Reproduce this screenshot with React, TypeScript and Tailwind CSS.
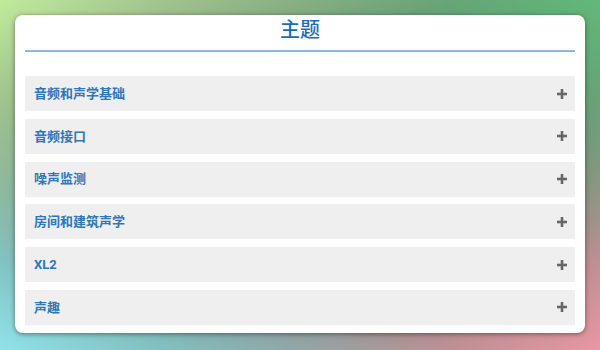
const topics = ['音频和声学基础', '音频接口', '噪声监测', '房间和建筑声学', 'XL2', '声趣']

function PlusIcon() {
  return (
    <svg width="10" height="10" viewBox="0 0 10 10" className="shrink-0">
      <rect x="0" y="3.7" width="10" height="2.6" fill="#666666" />
      <rect x="3.7" y="0" width="2.6" height="10" fill="#666666" />
    </svg>
  )
}

export default function App() {
  return (
    <div className="relative w-[600px] h-[350px] overflow-hidden bg-[#6c7f74] font-['Roboto','Noto_Sans_CJK_SC',sans-serif]">
      <div className="absolute inset-0 bg-[linear-gradient(to_bottom_right,#c0eb9c,rgba(192,235,156,0)_38%),linear-gradient(to_bottom_left,#62b878,rgba(98,184,120,0)_38%),linear-gradient(to_top_right,#8fe3ea,rgba(143,227,234,0)_38%),linear-gradient(to_top_left,#e997a3,rgba(233,151,163,0)_38%)]" />
      <div className="relative px-[15px] pt-[15px]">
        <div className="bg-white rounded-lg shadow-[0_1px_5px_rgba(0,0,0,0.45)] px-[10px] pb-[8px]">
          <h1 className="pt-[3px] leading-[25px] text-center text-[20px] font-medium text-[#1c6bb3]">主题</h1>
          <div className="mt-[7px] h-[2px] bg-[#8fb6dd]" />
          <div className="mt-[24px] flex flex-col gap-[7.8px]">
            {topics.map((t) => (
              <div key={t} className="h-[35px] bg-[#efefef] flex items-center justify-between pl-[9px] pr-[8px]">
                <span className="text-[13px] font-bold text-[#2e77b8]">{t}</span>
                <PlusIcon />
              </div>
            ))}
          </div>
        </div>
      </div>
    </div>
  )
}
